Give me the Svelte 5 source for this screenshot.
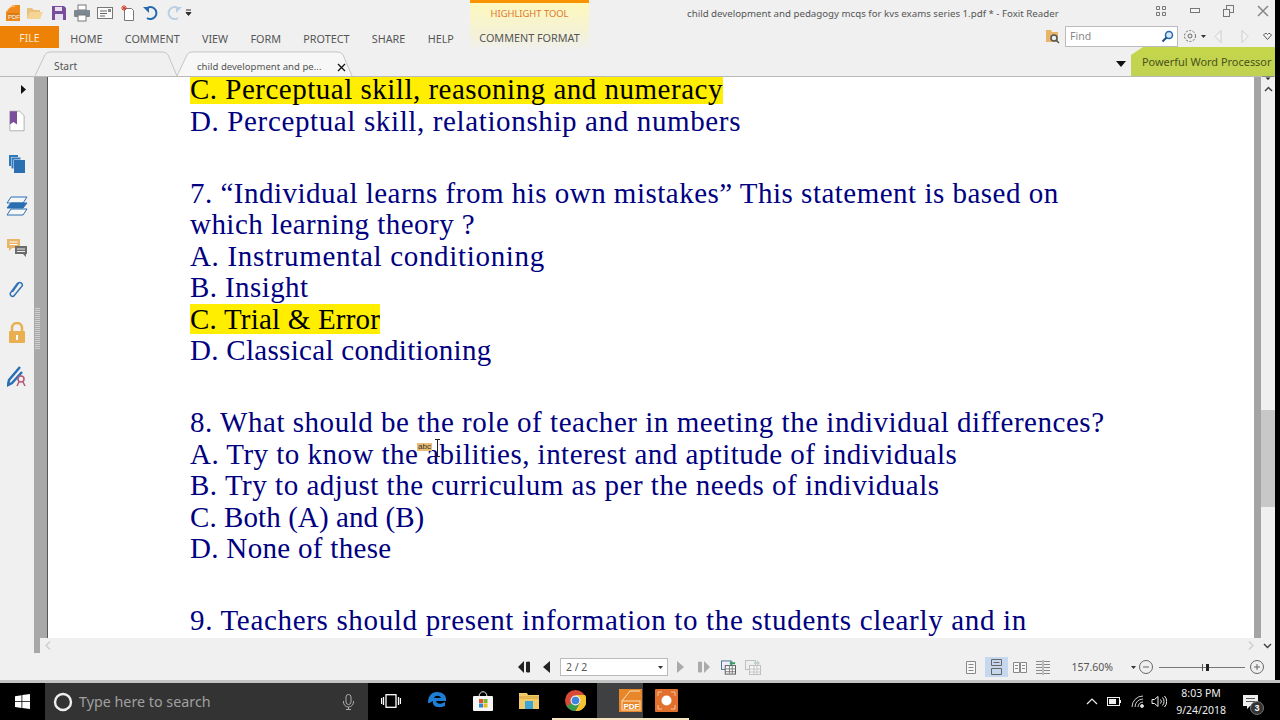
<script lang="ts">
	const tabs = ['HOME', 'COMMENT', 'VIEW', 'FORM', 'PROTECT', 'SHARE', 'HELP'];
	// fit: per line tracking tweak, the serif here runs a bit different from the pdf font
	const groups = [
		[
			{ text: 'C. Perceptual skill, reasoning and numeracy', mark: true, fit: 0 },
			{ text: 'D. Perceptual skill, relationship and numbers', fit: 0.13 }
		],
		[
			{ text: '7. “Individual learns from his own mistakes” This statement is based on', fit: -0.01 },
			{ text: 'which learning theory ?', fit: -0.04 },
			{ text: 'A. Instrumental conditioning', fit: 0.18 },
			{ text: 'B. Insight', fit: -0.1 },
			{ text: 'C. Trial & Error', mark: true, fit: -0.3 },
			{ text: 'D. Classical conditioning', fit: -0.2 }
		],
		[
			{ text: '8. What should be the role of teacher in meeting the individual differences?', fit: 0.03 },
			{ text: 'A. Try to know the abilities, interest and aptitude of individuals', fit: -0.03 },
			{ text: 'B. Try to adjust the curriculum as per the needs of individuals', fit: 0.02 },
			{ text: 'C. Both (A) and (B)', fit: -0.42 },
			{ text: 'D. None of these', fit: -0.19 }
		],
		[{ text: '9. Teachers should present information to the students clearly and in', fit: 0.17 }]
	];
</script>

<div class="screen">
	<div class="window">
		<header class="top">
			<div class="top-left">
				<div class="quick">
					<svg width="16" height="18" viewBox="0 0 16 18"><path d="M3 5 8 1h7v16H1V8z" fill="#f08a1d" /><path d="M2 7C4 3 7 2 10 2" stroke="#ffd9a8" fill="none" /><rect x="2.500" y="9" width="11" height="6" fill="#d97a12" /><text x="3" y="14.500" font-size="6" fill="#fff" font-family="Liberation Sans">PDF</text></svg>
					<svg width="18" height="18" viewBox="0 0 18 18"><path d="M1 15V4h5l2 2h6v3" fill="#e9c27f" /><path d="M1 15 4 8h13l-3 7z" fill="#f4d596" /></svg>
					<svg class="save" width="16" height="16" viewBox="0 0 16 16"><path d="M1 1h12l2 2v12H1z" fill="#7a4d9c" /><rect x="4" y="2" width="7" height="4" fill="#e8e0ee" /><rect x="4" y="9" width="8" height="6" fill="#e8e0ee" /></svg>
					<svg width="18" height="18" viewBox="0 0 18 18"><rect x="5" y="1" width="8" height="5" fill="#fff" stroke="#777" /><rect x="1" y="6" width="16" height="7" rx="1" fill="#7d8790" /><rect x="5" y="11" width="8" height="6" fill="#fff" stroke="#777" /></svg>
					<svg width="18" height="18" viewBox="0 0 18 18"><rect x="1.500" y="3.500" width="15" height="11" fill="#fafafa" stroke="#777" /><path d="M4 7h7M4 9.500h7M4 12h5" stroke="#666" /><rect x="12" y="5" width="3" height="3" fill="#888" /></svg>
					<svg width="18" height="18" viewBox="0 0 18 18"><path d="M5.500 4.500h7l2 2v10h-9z" fill="#fff" stroke="#777" /><path d="M5 1v6M2 4h6M3 2l4 4M7 2 3 6" stroke="#d8402c" /></svg>
					<svg width="18" height="18" viewBox="0 0 18 18"><path d="M4 5a6 6 0 1 1 1 9" fill="none" stroke="#2468b0" stroke-width="2" /><path d="M1 3h6v6z" fill="#2468b0" /></svg>
					<svg width="18" height="18" viewBox="0 0 18 18"><path d="M14 5a6 6 0 1 0-1 9" fill="none" stroke="#b9cfe4" stroke-width="2" /><path d="M17 3h-6v6z" fill="#b9cfe4" /></svg>
					<svg class="more" width="7" height="8" viewBox="0 0 7 8"><path d="M1 1h5M1 3.500h5l-2.500 3z" stroke="#333" fill="#333" /></svg>
				</div>
				<nav class="ribbon">
					<span class="file">FILE</span>
					{#each tabs as tab}
						<span class="ribbon-tab">{tab}</span>
					{/each}
				</nav>
			</div>
			<div class="context">
				<span class="context-title">HIGHLIGHT TOOL</span>
				<span class="context-tab">COMMENT FORMAT</span>
			</div>
			<div class="top-right">
				<div class="title-row">
					<span class="doc-title">child development and pedagogy mcqs for kvs exams series 1.pdf * - Foxit Reader</span>
					<div class="win-buttons">
						<svg width="12" height="12" viewBox="0 0 12 12" stroke="#777" fill="none"><path d="M1.500 1.500h3v3h-3zM7.500 1.500h3v3h-3zM1.500 7.500h3v3h-3zM7.500 7.500h3v3h-3z" /></svg>
						<svg width="12" height="6" viewBox="0 0 12 6" fill="#f4f4f4" stroke="#777"><rect x="1.500" y=".5" width="9" height="4" /></svg>
						<svg width="12" height="12" viewBox="0 0 12 12" fill="#f0f0f0" stroke="#777"><rect x="3.500" y=".5" width="7" height="7" /><rect x=".5" y="4.500" width="6" height="7" /></svg>
						<svg width="12" height="12" viewBox="0 0 12 12" stroke="#888" stroke-width="1.500"><path d="m1 1 10 10M11 1 1 11" /></svg>
					</div>
				</div>
				<div class="find-row">
					<svg class="find-folder" width="16" height="16" viewBox="0 0 16 16"><path d="M1 14V2h5l1 2h6v10z" fill="#e8b468" /><circle cx="9" cy="10" r="3" fill="#eee" stroke="#555" stroke-width="1.500" /><path d="m11 12 3 3" stroke="#555" stroke-width="1.500" /></svg>
					<div class="find">
						<span>Find</span>
						<svg width="13" height="13" viewBox="0 0 13 13"><circle cx="8" cy="5" r="3.500" fill="#d8e8f6" stroke="#2468b0" stroke-width="1.500" /><path d="M5.500 7.500 1.500 11.500" stroke="#1d4f86" stroke-width="2" /></svg>
					</div>
					<svg class="gear" width="14" height="14" viewBox="0 0 14 14" fill="none" stroke="#666"><circle cx="7" cy="7" r="2" /><circle cx="7" cy="7" r="5.500" stroke-dasharray="2 1.500" /></svg>
					<svg class="gear-drop" width="5" height="3" viewBox="0 0 5 3"><path d="M0 0h5L2.500 3z" fill="#333" /></svg>
					<svg class="arrow-prev" width="8" height="13" viewBox="0 0 8 13"><path d="M7 .5 1 6.500l6 6z" fill="#f5f5f5" stroke="#ccc" /></svg>
					<svg class="arrow-next" width="8" height="13" viewBox="0 0 8 13"><path d="m1 .5 6 6-6 6z" fill="#f5f5f5" stroke="#ccc" /></svg>
					<svg width="9" height="7" viewBox="0 0 9 7"><path d="M.5 2 2 .5h1.500l1 1 1-1H7L8.500 2l-4 4.500z" fill="none" stroke="#555" /></svg>
				</div>
			</div>
		</header>

		<div class="tab-row">
			<div class="doc-tab start">
				<svg class="tab-shape" viewBox="0 0 144 27" preserveAspectRatio="none"><path d="M0 27 10 5q2-3 5-3h113q4 0 6 3l9 22" fill="#f0f0f0" stroke="#c4c4c4" /></svg>
				<span>Start</span>
			</div>
			<div class="doc-tab active">
				<svg class="tab-shape" viewBox="0 0 176 27" preserveAspectRatio="none"><path d="M0 27 10 5q2-3 5-3h145q4 0 6 3l9 22" fill="#f7f7f7" stroke="#c4c4c4" /></svg>
				<span>child development and pe...</span>
				<svg class="close" width="9" height="9" viewBox="0 0 9 9"><path d="m1 1 7 7M8 1 1 8" stroke="#111" stroke-width="1.300" /></svg>
			</div>
			<svg class="tab-menu" width="10" height="6" viewBox="0 0 10 6"><path d="M0 0h10L5 6z" fill="#111" /></svg>
			<div class="promo">Powerful Word Processor</div>
		</div>

		<main class="body">
			<aside class="sidebar">
				<svg class="expand" width="5" height="9" viewBox="0 0 5 9"><path d="M0 0l5 4.500L0 9z" fill="#111" /></svg>
				<svg width="16" height="22" viewBox="0 0 18 24"><path d="M1 1h11l5 5v17H1z" fill="#fff" stroke="#aaa" /><path d="M1 1h8v15l-4-3-4 3z" fill="#7c4f9e" /></svg>
				<svg width="18" height="20" viewBox="0 0 18 20"><path d="M1 1h9v2H3v9H1z" fill="#2f79bd" /><path d="M3.500 3.500h9v2h-7v9h-2z" fill="#2f79bd" /><rect x="6" y="6" width="11" height="13" fill="#2a6fb2" /></svg>
				<svg width="22" height="20" viewBox="0 0 22 20" fill="none" stroke="#2a6fb2"><path d="M5 1h16l-4 6H1z" fill="#f6f6f6" /><path d="M5 7h16l-4 5H1z" fill="#2a6fb2" /><path d="M5 13h16l-4 6H1z" fill="#f6f6f6" /></svg>
				<svg width="22" height="20" viewBox="0 0 22 20"><path d="M1 1h13v9H6l-3 3v-3H1z" fill="#e8b468" /><path d="M3.500 4h8M3.500 6.500h8" stroke="#fff" /><path d="M9 8h12v8h-1v3l-3-3H9z" fill="#6c6c6c" /><path d="M11 11h8M11 13.500h8" stroke="#eee" /></svg>
				<svg width="18" height="20" viewBox="0 0 18 22"><path d="M5 14 12 4a3 3 0 0 1 4 3L7 18a2 2 0 0 1-4-3l8-11" transform="translate(-1 -1)" fill="none" stroke="#2f72b5" stroke-width="1.600" /></svg>
				<svg width="18" height="22" viewBox="0 0 18 22"><path d="M4 10V6a5 5 0 0 1 10 0v4" fill="none" stroke="#e8b050" stroke-width="2.500" /><rect x="1" y="9" width="16" height="12" rx="1" fill="#e8b050" /><rect x="8" y="13" width="2" height="5" fill="#fff" /></svg>
				<svg width="20" height="21" viewBox="0 0 20 21"><path d="M13 1 2 14l-1 5 4-2L15 6" fill="none" stroke="#2a6fb2" stroke-width="2.500" /><circle cx="14" cy="13" r="3" fill="none" stroke="#b35a78" stroke-width="1.500" /><path d="m12 16-2 4M16 16l2 4" stroke="#b35a78" stroke-width="1.500" /></svg>
			</aside>
			<div class="gutter">
				<div class="grip"></div>
			</div>
			<article class="page">
				{#each groups as group}
					<section class="question">
						{#each group as line}
							<p class="line" style="letter-spacing: {0.5 + line.fit}px"><span class:mark={line.mark}>{line.text}</span></p>
						{/each}
					</section>
				{/each}
				<div class="cursor">
					<span class="abc">abc</span>
					<svg width="7" height="18" viewBox="0 0 7 18"><path d="M1 .5h5M3.500.5v17M1 17.500h5" stroke="#222" fill="none" /></svg>
				</div>
			</article>
			<div class="gutter-right"></div>
			<div class="vscroll">
				<svg class="split" width="12" height="7" viewBox="0 0 12 7"><path d="M0 3.500h12" stroke="#888" /><path d="M3.500 2.500 6 0l2.500 2.500zM3.500 4.500 6 7l2.500-2.500z" fill="#222" /></svg>
				<svg width="9" height="6" viewBox="0 0 9 6"><path d="m1 5 3.500-3.500L8 5" fill="none" stroke="#444" stroke-width="1.500" /></svg>
				<div class="track"><div class="thumb"></div></div>
			</div>
		</main>

		<div class="hscroll">
			<div class="hscroll-gutter"></div>
			<svg class="scroll-left" width="6" height="9" viewBox="0 0 6 9"><path d="M5 .5 1 4.500l4 4" fill="none" stroke="#ccc" stroke-width="1.300" /></svg>
			<svg class="scroll-right" width="6" height="9" viewBox="0 0 6 9"><path d="m1 .5 4 4-4 4" fill="none" stroke="#ccc" stroke-width="1.300" /></svg>
			<svg width="9" height="6" viewBox="0 0 9 6"><path d="m1 1 3.500 3.500L8 1" fill="none" stroke="#444" stroke-width="1.500" /></svg>
		</div>

		<footer class="status">
			<div class="pager">
				<svg width="12" height="12" viewBox="0 0 12 12" fill="#222"><path d="M6 0v12L0 6z" /><path d="M8 1q3-1 4 0v10q-1 1-4 0z" /></svg>
				<svg class="prev" width="7" height="12" viewBox="0 0 7 12"><path d="M7 0v12L0 6z" fill="#222" /></svg>
				<div class="page-box"><span>2 / 2</span><svg width="5" height="3" viewBox="0 0 5 3"><path d="M0 0h5L2.500 3z" fill="#333" /></svg></div>
				<svg class="next" width="7" height="12" viewBox="0 0 7 12"><path d="M0 0v12l7-6z" fill="#aaa" /></svg>
				<svg class="last" width="12" height="12" viewBox="0 0 12 12" fill="#aaa"><path d="M0 1q1-1 4 0v10q-3 1-4 0z" /><path d="M6 0v12l6-6z" /></svg>
				<svg class="view-a" width="15" height="15" viewBox="0 0 16 15"><rect x=".5" y=".5" width="10" height="9" fill="#eef" stroke="#4a6d8c" /><rect x="4.500" y="5.500" width="11" height="9" fill="#fff" stroke="#555" /><path d="M5 9h10M5 12h10M9 6v8M12 6v8" stroke="#777" /><path d="m9 3 3-3v2h3v2h-3v2z" fill="#3b9a5e" /></svg>
				<svg class="view-b" width="16" height="15" viewBox="0 0 16 15" opacity=".4"><rect x=".5" y=".5" width="10" height="9" fill="#eee" stroke="#777" /><rect x="4.500" y="5.500" width="11" height="9" fill="#fff" stroke="#777" /><path d="M5 9h10M5 12h10M9 6v8M12 6v8" stroke="#888" /><path d="M15 3 12 0v2H9v2h3v2z" fill="#7a9" /></svg>
			</div>
			<div class="view-tools">
				<span class="mode"><svg width="10" height="13" viewBox="0 0 10 13" fill="#f8f8f8" stroke="#888"><path d="M.5.500h9v12h-9zM2.500 3.500h5M2.500 6.500h5M2.500 9.500h5" /></svg></span>
				<span class="mode on"><svg width="11" height="16" viewBox="0 0 11 16" fill="none" stroke="#666"><path d="M.5.500h10v6H.5zM.5 9.500h10v6H.5zM2.500 3.500h6" /></svg></span>
				<span class="mode"><svg width="14" height="11" viewBox="0 0 14 11" fill="#f8f8f8" stroke="#888"><path d="M.5.500h6v10h-6zM7.500.500h6v10h-6zM2 3.500h3M9 3.500h3M2 6.500h3M9 6.500h3" /></svg></span>
				<span class="mode"><svg width="14" height="15" viewBox="0 0 14 15" fill="none" stroke="#888"><path d="M0 1.500h6M8 1.500h6M0 4.500h6M8 4.500h6M0 7.500h6M8 7.500h6M0 10.500h6M8 10.500h6M0 13.500h6M8 13.500h6M7 0v15" /></svg></span>
				<span class="zoom-value">157.60%</span>
				<svg width="5" height="3" viewBox="0 0 5 3"><path d="M0 0h5L2.500 3z" fill="#333" /></svg>
				<svg class="zoom-out" width="14" height="14" viewBox="0 0 14 14" fill="none" stroke="#666"><circle cx="7" cy="7" r="6.500" /><path d="M4 7h6" /></svg>
				<div class="slider"><i class="tick"></i><i class="knob"></i></div>
				<svg width="14" height="14" viewBox="0 0 14 14" fill="none" stroke="#666"><circle cx="7" cy="7" r="6.500" /><path d="M4 7h6M7 4v6" /></svg>
			</div>
		</footer>
	</div>

	<div class="taskbar">
		<div class="start-btn">
			<svg width="15" height="15" viewBox="0 0 15 15" fill="#fff"><path d="M0 2.200 6.500 1.200v6H0zM7.300 1 15 0v7.200H7.300zM0 8h6.500v6L0 13zM7.300 8H15v7l-7.700-1.100z" /></svg>
		</div>
		<div class="search">
			<svg width="20" height="20" viewBox="0 0 20 20"><circle cx="10" cy="10" r="8" fill="none" stroke="#eee" stroke-width="2.400" /></svg>
			<span>Type here to search</span>
			<svg class="mic" width="11" height="16" viewBox="0 0 11 16" fill="none" stroke="#aaa"><rect x="3" y=".5" width="5" height="10" rx="2.500" /><path d="M.5 7v1a5 5 0 0 0 10 0V7M5.500 13v2.500M3 15.500h5" /></svg>
		</div>
		<div class="task-icons">
			<span class="task"><svg width="20" height="14" viewBox="0 0 20 14" fill="none" stroke="#fff" stroke-width="1.300"><rect x="5" y=".7" width="10" height="12.600" /><path d="M2.500 3v8M17.500 3v8M.5 4v6M19.500 4v6" /></svg></span>
			<span class="task"><svg width="20" height="20" viewBox="0 0 20 20"><path d="M10 1C4 1 1 6 1 11c0 3 2 0 5-1-1 5 4 8 12 5v-4c-5 3-8 2-9-1h10C20 4 15 1 10 1zm-3 6c1-3 6-3 7 0z" fill="#1c7ed6" /></svg></span>
			<span class="task"><svg width="22" height="22" viewBox="0 0 22 22"><path d="M7 7c0-7 8-7 8 0" fill="none" stroke="#eee" /><rect x="1" y="6" width="20" height="15" rx="1" fill="#f5f5f5" /><rect x="7" y="9" width="4" height="4" fill="#e2532d" /><rect x="11.500" y="9" width="4" height="4" fill="#7bb52c" /><rect x="7" y="13.500" width="4" height="4" fill="#2b8ad8" /><rect x="11.500" y="13.500" width="4" height="4" fill="#f5b61e" /></svg></span>
			<span class="task"><svg width="20" height="17" viewBox="0 0 20 17"><path d="M0 1h8l1 2h11v14H0z" fill="#f0cb6a" /><rect x="0" y="4" width="20" height="3" fill="#e5b64f" /><rect x="6" y="9" width="8" height="8" fill="#3ea5d6" /></svg></span>
			<span class="task"><svg width="21" height="21" viewBox="0 0 21 21"><circle cx="10.500" cy="10.500" r="10.500" fill="#d84a37" /><path d="M10.500 10.500 1.500 16a10.500 10.500 0 0 0 9 5l4.500-8z" fill="#3a9c4b" /><path d="M10.500 5H20a10.500 10.500 0 0 1-9.500 16L15 13z" fill="#f5c32e" /><circle cx="10.500" cy="10.500" r="5" fill="#eee" /><circle cx="10.500" cy="10.500" r="3.800" fill="#3f83dc" /></svg></span>
			<span class="task active"><svg width="23" height="23" viewBox="0 0 23 23"><rect width="23" height="23" fill="#e8862a" /><path d="M3 12 11 2h10" fill="none" stroke="#ffe0b8" /><rect x="3" y="12" width="18" height="9" fill="none" stroke="#ffe0b8" /><text x="4.500" y="19.500" font-size="8" font-weight="700" fill="#fff" font-family="Liberation Sans">PDF</text></svg></span>
			<span class="task"><svg width="23" height="23" viewBox="0 0 23 23"><rect width="23" height="23" rx="1" fill="#e0702c" /><circle cx="11.500" cy="11.500" r="5" fill="#fff" /><path d="M3 7V3h4M16 3h4v4M20 16v4h-4M7 20H3v-4" fill="none" stroke="#f6c39d" /></svg></span>
		</div>
		<div class="tray">
			<svg width="12" height="7" viewBox="0 0 12 7"><path d="m1 6 5-5 5 5" fill="none" stroke="#eee" stroke-width="1.200" /></svg>
			<svg class="battery" width="14" height="9" viewBox="0 0 14 9"><rect x=".5" y=".5" width="12" height="8" fill="none" stroke="#eee" /><rect x="2" y="2" width="7" height="5" fill="#eee" /><rect x="13" y="3" width="1" height="3" fill="#eee" /></svg>
			<svg class="wifi" width="14" height="13" viewBox="0 0 14 13" fill="none" stroke="#ccc"><path d="M1 12a11 11 0 0 1 11-11M4 12a8 8 0 0 1 8-8M7 12a5 5 0 0 1 5-5" /><circle cx="11" cy="11" r="1.500" fill="#eee" /></svg>
			<svg class="speaker" width="16" height="13" viewBox="0 0 16 13" fill="none" stroke="#eee"><path d="M1 4.500h2.500L7 1.500v10l-3.500-3H1zM9.500 4.500a3 3 0 0 1 0 4M11.500 2.500a6 6 0 0 1 0 8M13.500 1a8 8 0 0 1 0 11" /></svg>
			<div class="clock"><span>8:03 PM</span><span>9/24/2018</span></div>
			<div class="notify">
				<svg width="15" height="14" viewBox="0 0 15 14"><path d="M0 0h15v11H7l-3 3v-3H0z" fill="#eee" /><path d="M3 3.500h9M3 6.500h9" stroke="#555" /></svg>
				<span class="badge">3</span>
			</div>
		</div>
	</div>
</div>

<style>
	:global(body) {
		margin: 0;
		background: #000;
	}

	svg {
		display: block;
		flex-shrink: 0;
	}

	.screen {
		width: 1280px;
		height: 720px;
		display: flex;
		flex-direction: column;
		overflow: hidden;
		font-family: 'Noto Sans', sans-serif;
		color: #555;
	}

	.window {
		width: 1275px;
		height: 680px;
		display: flex;
		flex-direction: column;
		background: #f0f0f0;
		border-right: 5px solid #000;
	}

	.top {
		display: flex;
		height: 50px;
	}

	.top-left {
		width: 470px;
		flex-shrink: 0;
	}

	.quick {
		display: flex;
		align-items: center;
		gap: 5px;
		height: 26px;
		padding-left: 5px;
	}

	.save {
		margin: 0 1px 0 2px;
	}

	.more {
		margin-left: -3px;
	}

	.ribbon {
		display: flex;
		align-items: center;
		height: 24px;
		gap: 22.300px;
	}

	.file {
		width: 59px;
		height: 22px;
		line-height: 24px;
		margin-top: -3px;
		margin-right: -11px;
		background: #ee8206;
		color: #ffe9cc;
		font-size: 10.500px;
		text-align: center;
	}

	.ribbon-tab {
		font-size: 10.800px;
		color: #555;
	}

	.context {
		width: 119px;
		flex-shrink: 0;
		box-sizing: border-box;
		border-top: 3px solid #fb9400;
		background: linear-gradient(#fdf8bd, #f3f1d9 70%, #f0f0f0);
		display: flex;
		flex-direction: column;
		align-items: center;
	}

	.context-title {
		height: 23px;
		line-height: 21px;
		font-size: 9.400px;
		color: #e0762a;
	}

	.context-tab {
		line-height: 24px;
		font-size: 10.800px;
		white-space: nowrap;
		color: #555;
	}

	.top-right {
		flex: 1;
		min-width: 0;
	}

	.title-row {
		display: flex;
		align-items: center;
		height: 26px;
	}

	.doc-title {
		margin-left: 98px;
		font-size: 9.700px;
		white-space: nowrap;
		color: #555;
	}

	.win-buttons {
		display: flex;
		align-items: center;
		gap: 22px;
		margin-left: auto;
		padding-right: 6px;
		margin-top: -4px;
	}

	.find-row {
		display: flex;
		align-items: center;
		justify-content: flex-end;
		height: 24px;
		box-sizing: border-box;
		padding: 0 3px 4px 0;
	}

	.find-folder {
		margin-right: 4px;
	}

	.find {
		width: 113px;
		height: 21px;
		box-sizing: border-box;
		display: flex;
		align-items: center;
		justify-content: space-between;
		padding: 0 3px 0 4px;
		margin-right: 5px;
		background: #fff;
		border: 1px solid #bbb;
		font-size: 10.500px;
		color: #888;
	}

	.gear {
		margin-right: 4px;
	}

	.gear-drop {
		margin-right: 8px;
	}

	.arrow-prev {
		margin-right: 19px;
	}

	.arrow-next {
		margin-right: 14px;
	}

	.tab-row {
		display: flex;
		align-items: flex-end;
		height: 27px;
		padding-left: 35px;
		box-sizing: border-box;
		border-bottom: 1px solid #b9b9b9;
	}

	.doc-tab {
		position: relative;
		height: 26px;
		display: flex;
		align-items: center;
		box-sizing: border-box;
		padding-top: 6px;
		font-size: 10.300px;
		color: #555;
	}

	.tab-shape {
		position: absolute;
		inset: 0;
		width: 100%;
		height: 100%;
	}

	.doc-tab span,
	.doc-tab .close {
		position: relative;
	}

	.start {
		width: 143px;
		padding-left: 19px;
	}

	.active {
		width: 176px;
		padding-left: 20px;
		font-size: 9.600px;
		white-space: nowrap;
		margin-left: -1px;
	}

	.close {
		margin-left: 16px;
		margin-top: 2px;
	}

	.tab-menu {
		margin-left: auto;
		align-self: center;
		margin-top: 2px;
	}

	.promo {
		width: 144px;
		height: 29px;
		margin-left: 5px;
		margin-top: -3px;
		box-sizing: border-box;
		padding-left: 11px;
		line-height: 30px;
		font-size: 10.950px;
		white-space: nowrap;
		overflow: hidden;
		color: #4a5220;
		background: linear-gradient(#c5d64a, #c0d252);
		clip-path: polygon(12px 0, 100% 0, 100% 100%, 0 100%, 0 8px);
		flex-shrink: 0;
	}

	.body {
		display: flex;
		height: 561px;
		flex-shrink: 0;
	}

	.sidebar {
		width: 34px;
		flex-shrink: 0;
		display: flex;
		flex-direction: column;
		align-items: center;
		gap: 22px;
		padding-top: 8px;
		box-sizing: border-box;
	}

	.expand {
		margin-left: 12px;
		margin-bottom: -6px;
	}

	.gutter {
		width: 13px;
		flex-shrink: 0;
		display: flex;
		align-items: center;
		background: #a8a8a8;
		border-right: 1px solid #555;
	}

	.grip {
		width: 5px;
		height: 43px;
		margin-left: 1px;
		margin-bottom: 58px;
		background: repeating-linear-gradient(#a8a8a8 0 1px, #d0d0d0 1px 2px);
	}

	.page {
		position: relative;
		flex: 1;
		min-width: 0;
		background: #fff;
		overflow: hidden;
		padding-left: 142px;
		display: flex;
		flex-direction: column;
		gap: 40.500px;
		font-family: 'Liberation Serif', serif;
		font-size: 29px;
		color: #000080;
	}

	.question {
		flex-shrink: 0;
	}

	.line {
		margin: 0;
		height: 31.500px;
		line-height: 31.500px;
		white-space: nowrap;
	}

	.question:first-child {
		margin-top: -3px;
	}

	.mark {
		display: inline-block;
		line-height: 30px;
		background: #ffee00;
		color: #000;
	}

	.cursor {
		position: absolute;
		left: 369px;
		top: 362px;
		display: flex;
		align-items: center;
		gap: 2px;
		letter-spacing: 0;
	}

	.abc {
		margin-top: -2px;
		padding: 0 1px;
		background: #e8bd78;
		font: 8px/8px 'Liberation Sans', sans-serif;
		color: #332;
	}

	.gutter-right {
		width: 7px;
		flex-shrink: 0;
		background: #a4a4a4;
	}

	.vscroll {
		width: 14px;
		flex-shrink: 0;
		display: flex;
		flex-direction: column;
		align-items: center;
		gap: 6px;
	}

	.split {
		margin-top: -4px;
	}

	.track {
		flex: 1;
		width: 100%;
		padding-top: 312px;
		box-sizing: border-box;
	}

	.thumb {
		height: 97px;
		background: #c8c8c8;
	}

	.hscroll {
		display: flex;
		align-items: center;
		height: 15px;
		padding: 0 3px 0 34px;
	}

	.hscroll-gutter {
		width: 6px;
		height: 100%;
		background: #a8a8a8;
	}

	.scroll-left {
		margin-left: 5px;
	}

	.scroll-right {
		margin-left: auto;
		margin-right: 9px;
	}

	.status {
		display: flex;
		align-items: center;
		justify-content: space-between;
		height: 27px;
		padding-top: 1px;
		box-sizing: border-box;
	}

	.pager {
		display: flex;
		align-items: center;
		margin-left: 518px;
	}

	.prev {
		margin-left: 13px;
	}

	.page-box {
		width: 108px;
		height: 18px;
		box-sizing: border-box;
		display: flex;
		align-items: center;
		justify-content: space-between;
		padding: 0 4px 0 5px;
		margin-left: 10px;
		background: #fff;
		border: 1px solid #bbb;
		font-size: 10.500px;
		color: #555;
	}

	.next {
		margin-left: 9px;
	}

	.last {
		margin-left: 14px;
	}

	.view-a {
		margin-left: 11px;
	}

	.view-b {
		margin-left: 9px;
	}

	.view-tools {
		display: flex;
		align-items: center;
		padding-right: 11px;
	}

	.mode {
		width: 23px;
		height: 20px;
		display: flex;
		align-items: center;
		justify-content: center;
	}

	.mode.on {
		margin-left: 3px;
		background: #c6d8ee;
	}

	.zoom-value {
		margin-left: 17px;
		margin-right: 18px;
		font-size: 10.500px;
		color: #555;
	}

	.zoom-out {
		margin-left: 3px;
	}

	.slider {
		position: relative;
		width: 86px;
		height: 1px;
		margin: 0 5px 0 6px;
		background: #777;
	}

	.tick {
		position: absolute;
		left: 43px;
		top: -3px;
		width: 1px;
		height: 7px;
		background: #555;
	}

	.knob {
		position: absolute;
		left: 47px;
		top: -3px;
		width: 3px;
		height: 7px;
		background: #222;
	}

	.taskbar {
		height: 40px;
		box-sizing: border-box;
		border-top: 3px solid #c4c4c4;
		display: flex;
		align-items: center;
		background: #000;
	}

	.start-btn {
		width: 45px;
		display: flex;
		justify-content: center;
		flex-shrink: 0;
	}

	.search {
		width: 323px;
		height: 37px;
		box-sizing: border-box;
		display: flex;
		align-items: center;
		padding: 0 14px 0 8px;
		flex-shrink: 0;
		background: #333;
		font: 14.300px 'Noto Sans', sans-serif;
		color: #a0a0a0;
	}

	.search span {
		margin-left: 6px;
	}

	.mic {
		margin-left: auto;
	}

	.task-icons {
		display: flex;
	}

	.task {
		width: 46px;
		height: 37px;
		box-sizing: border-box;
		display: flex;
		align-items: center;
		justify-content: center;
		border-bottom: 2px solid transparent;
	}

	.task:nth-child(n + 5) {
		border-bottom-color: #f5e4bd;
	}

	.task.active {
		background: #3f4042;
	}

	.tray {
		display: flex;
		align-items: center;
		margin-left: auto;
		padding-right: 22px;
		color: #eee;
	}

	.battery {
		margin-left: 9px;
	}

	.wifi {
		margin-left: 10px;
	}

	.speaker {
		margin-left: 6px;
	}

	.clock {
		display: flex;
		flex-direction: column;
		align-items: center;
		margin-left: 9px;
		font: 10.500px/17px 'Noto Sans', sans-serif;
	}

	.notify {
		position: relative;
		margin-left: 17px;
	}

	.badge {
		position: absolute;
		left: 7px;
		top: 6px;
		width: 14px;
		height: 14px;
		border-radius: 50%;
		background: #333;
		border: 1px solid #777;
		box-sizing: border-box;
		font: 700 9px/12px 'Liberation Sans', sans-serif;
		text-align: center;
		color: #fff;
	}
</style>
